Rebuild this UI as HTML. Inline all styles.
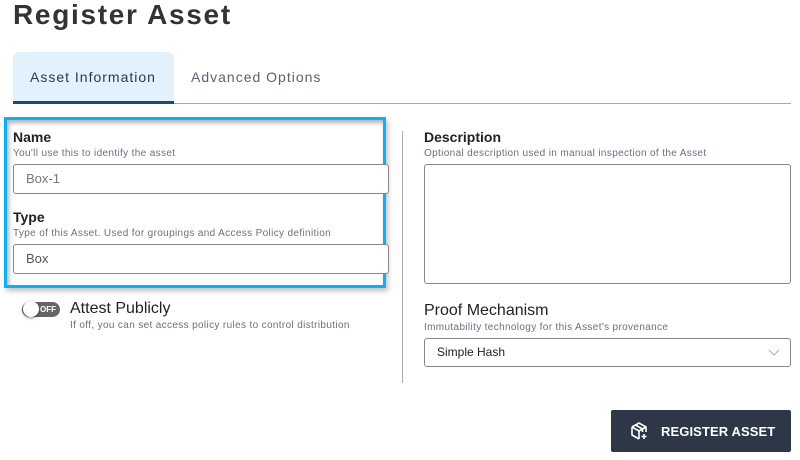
<!DOCTYPE html>
<html><head><meta charset="utf-8"><style>
*{box-sizing:border-box;margin:0;padding:0}
body{width:800px;height:460px;background:#fff;font-family:"Liberation Sans",sans-serif;position:relative;overflow:hidden;color:#1f2430}
.a{position:absolute}
h1{position:absolute;left:13px;top:-1px;font-size:28px;font-weight:bold;color:#333;letter-spacing:1.7px}
.lab{font-size:14px;font-weight:bold;color:#222;position:absolute}
.lab2{font-size:16px;color:#222;position:absolute}
.help{font-size:10px;color:#6b7080;position:absolute;letter-spacing:0.35px}
.inp{position:absolute;border:1px solid #888;border-radius:3px;background:#fff;font-size:13px;color:#777;padding-left:12px}
</style></head><body>
<h1>Register Asset</h1>
<div class="a" style="left:13px;top:52px;width:161px;height:52px;background:#e2f1fc;border-radius:6px 6px 0 0"></div>
<div class="a" style="left:13px;top:101px;width:161px;height:3px;background:#1e4a68"></div>
<div class="a" style="left:174px;top:103px;width:617px;height:1px;background:#aaa"></div>
<div class="a" style="left:30px;top:69px;font-size:14px;color:#2a3850;letter-spacing:1px">Asset Information</div>
<div class="a" style="left:191px;top:69px;font-size:14px;color:#5a6270;letter-spacing:1px">Advanced Options</div>

<div class="a" style="left:4px;top:117px;width:382px;height:171px;border:3px solid #0fb0ef;box-shadow:inset 2px 3px 4px rgba(0,0,0,.3),2px 3px 5px rgba(0,0,0,.25)"></div>
<div class="lab" style="left:13px;top:129px;font-weight:600">Name</div>
<div class="help" style="left:13px;top:148px">You'll use this to identify the asset</div>
<div class="inp" style="left:13px;top:164px;width:376px;height:30px;line-height:28px">Box-1</div>
<div class="lab" style="left:13px;top:209px">Type</div>
<div class="help" style="left:13px;top:228px">Type of this Asset. Used for groupings and Access Policy definition</div>
<div class="inp" style="left:13px;top:244px;width:376px;height:30px;line-height:28px;color:#555">Box</div>

<div class="a" style="left:22px;top:302px;width:38px;height:15px;border-radius:8px;background:#666"></div>
<div class="a" style="left:23px;top:301px;width:16px;height:16px;border-radius:50%;background:#fff;box-shadow:0 1px 3px rgba(0,0,0,.5)"></div>
<div class="a" style="left:40px;top:305px;font-size:8px;font-weight:bold;color:#fff">OFF</div>
<div class="lab2" style="left:70px;top:300px">Attest Publicly</div>
<div class="help" style="left:70px;top:320px">If off, you can set access policy rules to control distribution</div>

<div class="a" style="left:402px;top:131px;width:1px;height:252px;background:#aaa"></div>

<div class="lab" style="left:424px;top:129px">Description</div>
<div class="help" style="left:424px;top:148px">Optional description used in manual inspection of the Asset</div>
<div class="inp" style="left:424px;top:164px;width:367px;height:120px"></div>
<div class="lab2" style="left:424px;top:302px">Proof Mechanism</div>
<div class="help" style="left:424px;top:322px">Immutability technology for this Asset's provenance</div>
<div class="inp" style="left:424px;top:338px;width:367px;height:29px;line-height:27px;color:#222;font-size:12px">Simple Hash
<svg style="position:absolute;right:10px;top:10px" width="12" height="8"><path d="M1 1l5 5 5-5" fill="none" stroke="#aaa" stroke-width="1"/></svg></div>

<div class="a" style="left:611px;top:410px;width:180px;height:42px;background:#2d3748;border-radius:2px"></div>
<svg class="a" style="left:629px;top:421px" width="20" height="20" viewBox="0 0 20 20" fill="none" stroke="#fff" stroke-width="1.6"><path d="M3 6l7-4 7 4v5M3 6v8l7 4M3 6l7 4 7-4M10 10v8M6.5 4l7 4v3"/><path d="M15 13v5M12.5 15.5h5"/></svg>
<div class="a" style="left:661px;top:424px;font-size:13px;font-weight:bold;color:#fff;letter-spacing:0.1px">REGISTER ASSET</div>
</body></html>
